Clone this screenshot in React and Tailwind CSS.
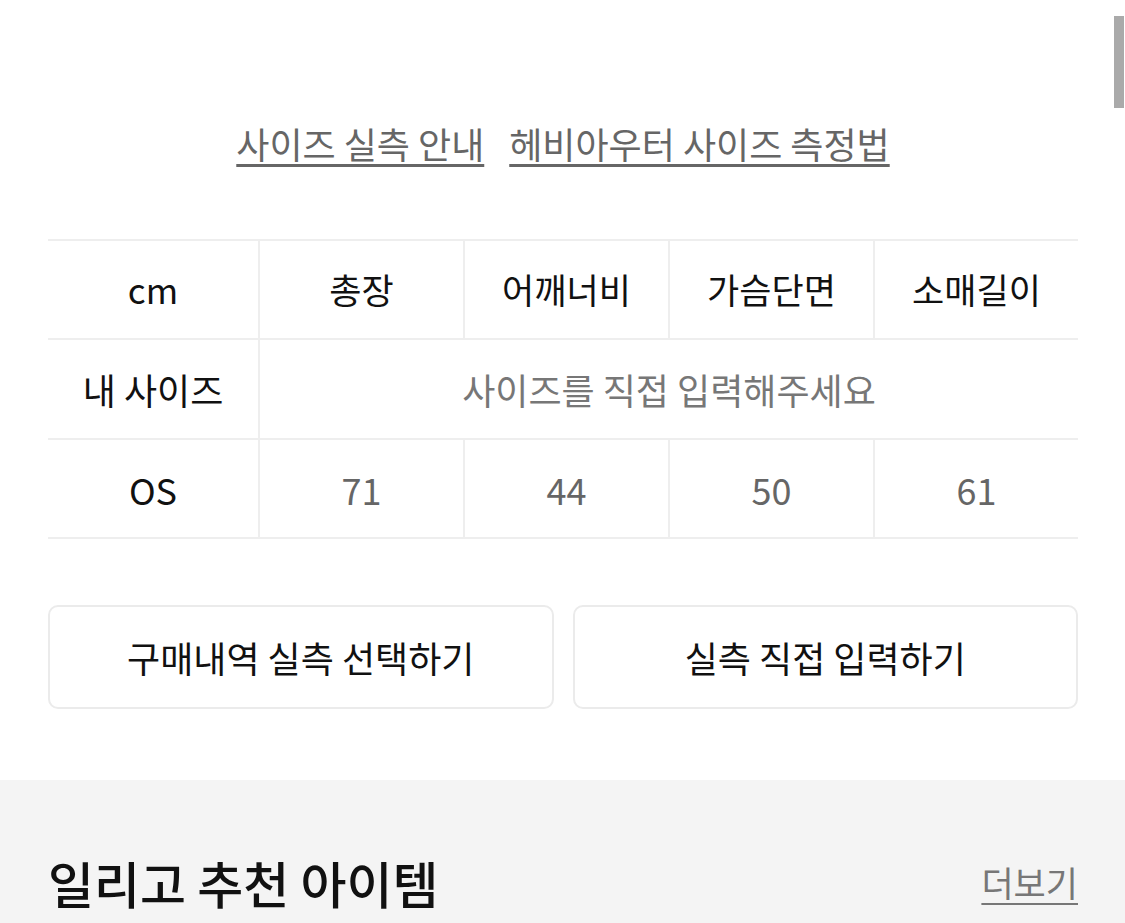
import React from 'react';

const font = { fontFamily: '"Noto Sans CJK KR", "Noto Sans", sans-serif' };

const headers = ['총장', '어깨너비', '가슴단면', '소매길이'];
const values = ['71', '44', '50', '61'];

const App = () => {
  return (
    <div className="relative w-[1125px] h-[923px] overflow-hidden bg-white" style={font}>
      {/* scrollbar thumb */}
      <div className="absolute right-[1px] top-[16px] w-[10px] h-[92px] bg-[#aaaaaa]" />

      <div className="px-[48px] pr-[47px]">
        <div className="flex justify-center gap-[25px] pt-[117px] text-[36px] leading-[52px] text-[#666]">
          <span className="underline decoration-[3px] underline-offset-[5px]">사이즈 실측 안내</span>
          <span className="underline decoration-[3px] underline-offset-[5px]">헤비아우터 사이즈 측정법</span>
        </div>

        <div className="mt-[70px] border-t-2 border-[#eeeeee]">
          <div className="grid grid-cols-[212px_205px_205px_205px_1fr] h-[99px] border-b-2 border-[#eeeeee] text-[35px] text-[#111]">
            <div className="flex items-center justify-center border-r-2 border-[#eeeeee]">cm</div>
            {headers.map((h, i) => (
              <div key={h} className={`flex items-center justify-center ${i < 3 ? 'border-r-2 border-[#eeeeee]' : ''}`}>{h}</div>
            ))}
          </div>
          <div className="grid grid-cols-[212px_1fr] h-[100px] border-b-2 border-[#eeeeee] text-[36px]">
            <div className="flex items-center justify-center border-r-2 border-[#eeeeee] text-[#111]">내 사이즈</div>
            <div className="flex items-center justify-center text-[#777]">사이즈를 직접 입력해주세요</div>
          </div>
          <div className="grid grid-cols-[212px_205px_205px_205px_1fr] h-[99px] border-b-2 border-[#eeeeee] text-[36px]">
            <div className="flex items-center justify-center border-r-2 border-[#eeeeee] text-[#111]">OS</div>
            {values.map((v, i) => (
              <div key={i} className={`flex items-center justify-center text-[#666] ${i < 3 ? 'border-r-2 border-[#eeeeee]' : ''}`}>{v}</div>
            ))}
          </div>
        </div>

        <div className="mt-[66px] grid grid-cols-2 gap-[19px]">
          <button className="h-[104px] rounded-[10px] border-2 border-[#ebebeb] bg-white text-[36px] text-[#111]">구매내역 실측 선택하기</button>
          <button className="h-[104px] rounded-[10px] border-2 border-[#ebebeb] bg-white text-[36px] text-[#111]">실측 직접 입력하기</button>
        </div>
      </div>

      <div className="mt-[71px] bg-[#f4f4f4] h-[200px] px-[48px] pr-[47px] pt-[70px]">
        <div className="flex items-center justify-between">
          <h2 className="text-[50px] leading-[64px] font-medium text-[#111]">일리고 추천 아이템</h2>
          <span className="text-[35px] text-[#777] underline decoration-2 underline-offset-[6px]">더보기</span>
        </div>
      </div>
    </div>
  );
};

export default App;
